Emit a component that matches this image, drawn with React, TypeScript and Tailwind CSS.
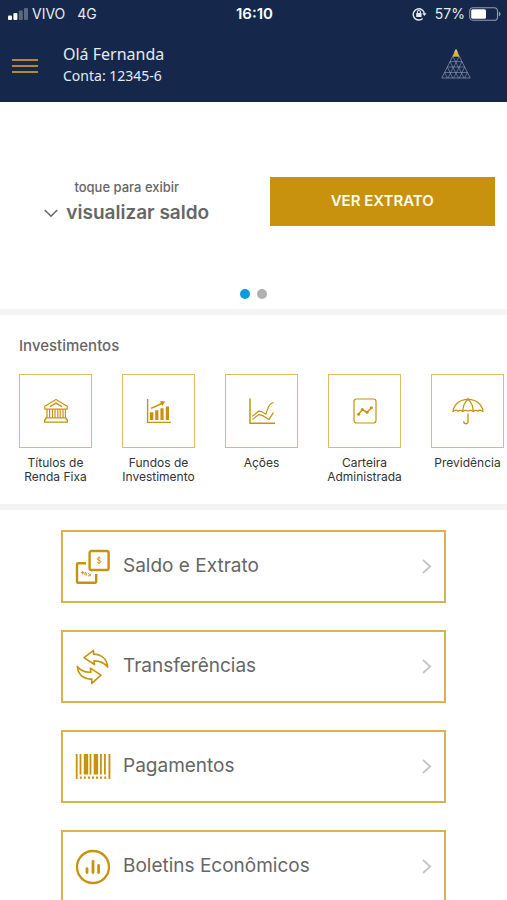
import type { ReactNode } from 'react';

const GOLD = '#c8920f';

function SignalIcon() {
  return (
    <svg width="20" height="14" viewBox="0 0 20 14" aria-hidden="true">
      <rect x="0" y="8.5" width="4" height="4.5" rx="1" fill="#fff" />
      <rect x="5.4" y="6" width="4" height="7" rx="1" fill="#fff" />
      <rect x="10.8" y="3.5" width="4" height="9.5" rx="1" fill="#fff" opacity="0.3" />
      <rect x="16" y="1" width="4" height="12" rx="1" fill="#fff" opacity="0.3" />
    </svg>
  );
}

function RotationLockIcon() {
  return (
    <svg width="15" height="14" viewBox="0 0 15 14" fill="none" stroke="#e6eaf2" aria-hidden="true">
      <path d="M10.6 11.6A5.6 5.6 0 1 1 12.4 6.6" strokeWidth="1.4" />
      <path d="M10.2 6.2h4.4l-2.2 2.9z" fill="#e6eaf2" stroke="none" />
      <rect x="4.2" y="6" width="5.4" height="4" rx="0.6" fill="#e6eaf2" stroke="none" />
      <path d="M5.4 6.2V5a1.5 1.5 0 0 1 3 0v1.2" strokeWidth="1.1" />
    </svg>
  );
}

function BatteryIcon() {
  return (
    <svg width="32" height="14" viewBox="0 0 32 14" aria-hidden="true">
      <rect x="0.7" y="0.7" width="27.8" height="12.6" rx="3.4" fill="none" stroke="#8f9bb0" strokeWidth="1.1" />
      <rect x="2.2" y="2.2" width="14.8" height="9.6" rx="1.6" fill="#fff" />
      <path d="M29.8 4.7c1.1.4 1.7 1.2 1.7 2.3s-.6 1.9-1.7 2.3z" fill="#8f9bb0" />
    </svg>
  );
}

function PyramidLogo() {
  return (
    <svg width="30" height="30" viewBox="0 0 30 30" fill="none" stroke="#8e9ab3" aria-label="Pirâmide" role="img">
      <path d="M15 .8.8 29h28.4z" strokeWidth="0.7" />
      <path
        d="M11.8 7.2h6.4M9 12.6h12M6.3 18h17.4M3.6 23.5h22.8M11.8 7.2l2.7 5.4 2.9 5.4 2.8 5.5L23 29M9 12.6l2.7 5.4 2.8 5.5 3 5.5M6.3 18 9 23.5l2.7 5.500M3.6 23.5 6.4 29M18.2 7.2l-2.7 5.4-2.9 5.4-2.8 5.5L7 29M21 12.6 18.3 18l-2.8 5.5-3 5.5M23.7 18 21 23.5 18.3 29M26.4 23.5 23.6 29"
        strokeWidth="0.6"
      />
      <path d="M15 .5 11.6 7.4h6.8z" fill="#e3b522" stroke="none" />
      <path d="M13.6 3.4 15 .6l1.4 2.8" stroke="#e8dfbd" strokeWidth="0.8" />
    </svg>
  );
}

function BankIcon() {
  return (
    <svg width="26" height="26" viewBox="0 0 26 26" fill="none" stroke={GOLD} strokeWidth="1.2" strokeLinejoin="round" aria-hidden="true">
      <path d="M13 1.5 1.8 8.3v2.8h22.4V8.3z" />
      <path d="M7 8.7 13 5.2l6 3.5" strokeWidth="1.4" />
      <path d="M4 11.2v8.6M6.6 11.2v8.6M9.5 11.2v8.6M12 11.2v8.6M14.8 11.2v8.6M17.2 11.2v8.6M20 11.2v8.6M22.4 11.2v8.6" />
      <path d="M2.8 19.8h20.4v1.8H24.4v2.6H1.6v-2.6h1.2z" />
    </svg>
  );
}

function GrowthIcon() {
  return (
    <svg width="26" height="26" viewBox="0 0 26 26" fill="none" stroke={GOLD} aria-hidden="true">
      <path d="M1.6 1v23.4H25" strokeWidth="1.4" />
      <path d="M3.8 14.3h3.6V22H3.8zM9.2 12.3h3.2V22H9.2zM14.4 10.3h3.2V22h-3.2zM19.8 8.4H23V22h-3.2z" fill={GOLD} stroke="none" />
      <path d="M5 10.4 10.5 8l6-3" strokeWidth="1.5" />
      <path d="m14 3 5.2.6-3 4.4z" fill={GOLD} stroke="none" />
    </svg>
  );
}

function StockIcon() {
  return (
    <svg width="28" height="28" viewBox="0 0 28 28" fill="none" stroke={GOLD} strokeWidth="1.2" aria-hidden="true">
      <path d="M2 1.500v24.800h25" strokeWidth="1.5" />
      <path d="m4.500 19.200 6-5 3 .4 4.400 2.600 2.600-7.400c1-2.200 2.600-3.600 5-4.500" />
      <path d="m4.500 22.400 6.200-4.800 3.500.8 6.800 4 4.400-6.800" />
    </svg>
  );
}

function PortfolioIcon() {
  return (
    <svg width="26" height="28" viewBox="0 0 26 28" fill="none" stroke={GOLD} strokeWidth="1.2" aria-hidden="true">
      <rect x="2" y="2" width="22" height="24" rx="2.4" />
      <path d="m6.600 17 3.800-4.400 4.600 2.600 4.400-4.200" strokeWidth="1.500" />
      <g fill={GOLD} stroke="none">
        <circle cx="6.600" cy="17.2" r="1.5" />
        <circle cx="10.400" cy="12.6" r="1.5" />
        <circle cx="15" cy="15.2" r="1.5" />
        <circle cx="19.400" cy="10.8" r="1.5" />
      </g>
    </svg>
  );
}

function UmbrellaIcon() {
  return (
    <svg width="32" height="28" viewBox="0 0 32 28" fill="none" stroke={GOLD} strokeWidth="1.3" strokeLinecap="round" strokeLinejoin="round" aria-hidden="true">
      <path d="M1 14.6C1.6 7.500 8 2.400 16 2.400s14.400 5.100 15 12.200c-1.600-1.600-3.600-1.800-5-.4-1.500-1-3.300-1-4.700.4-1.600-1.500-3.300-1.700-5.300-.6-2-1.100-3.700-.9-5.300.6-1.400-1.400-3.200-1.400-4.700-.4-1.400-1.400-3.400-1.200-5 .4z" />
      <path d="M10.700 14.400C11 8.800 13 4.600 16 2.400c3 2.200 5 6.400 5.300 12M16 1.400v1" />
      <path d="M16 17v8c0 2.400-4.200 2.300-4.200-.3" />
    </svg>
  );
}

function BalanceIcon() {
  return (
    <svg width="36" height="36" viewBox="0 0 36 36" fill="none" stroke={GOLD} strokeWidth="2.400" aria-hidden="true">
      <rect x="14.600" y="2" width="19" height="19" rx="1.800" />
      <path d="M11 14.300H3.600a1.600 1.600 0 0 0-1.600 1.600v16.300a1.600 1.600 0 0 0 1.600 1.600h16a1.600 1.600 0 0 0 1.600-1.600v-7.200" />
      <path d="M25.700 9.400c-.4-.6-1-.8-1.700-.8-1 0-1.700.5-1.700 1.300 0 1.800 3.500 1 3.500 2.800 0 .9-.8 1.300-1.800 1.300-.8 0-1.500-.3-1.900-.8M24 7.600v7.400" strokeWidth="0.900" />
      <path d="M6 23.700h3.400M7.700 22v3.400M9.600 25.800l1-2.800M11.400 24.200l-.4 2.600M13 24.600c1.800-.8 2.200 2.600 0 2.400M15.400 24.800l-.3 2.600" strokeWidth="1" />
    </svg>
  );
}

function TransferIcon() {
  return (
    <svg width="36" height="36" viewBox="0 0 36 36" fill="none" stroke={GOLD} strokeWidth="1.600" strokeLinejoin="round" aria-hidden="true">
      <path d="M9 8.600 18.600 1.400v3.700c7.600.3 13.400 4.700 14.100 13-3.600-4.400-7.600-6.200-13.700-6.200l.5 3.600z" />
      <path d="M26 26.200 16.800 34.400v-4.300C8.600 30.200 2.800 25.400 2.300 17.500c3.200 4.300 7.400 5.900 13.500 5.700l-.4-4z" />
    </svg>
  );
}

function BarcodeIcon() {
  return (
    <svg width="36" height="28" viewBox="0 0 36 28" fill={GOLD} aria-hidden="true">
      <path d="M.8 1h1.800v25H.8zM4.600 1h1.800v20.500H4.600zM8.800 1h4.400v20.500H8.800zM14.600 1h1.800v20.500h-1.800zM18.700 1h4.400v20.500h-4.400zM25 1h1.800v20.500H25zM29 1h1.800v20.500H29zM33.500 1h1.900v25h-1.900z" />
      <path d="M4.800 23.500h2v2.300h-2zM8.800 23.500h2v2.300h-2zM12.900 23.500h2v2.300h-2zM17 23.500h2v2.300h-2zM21 23.500h2v2.300h-2zM25 23.500h2v2.300h-2zM29.200 23.500h2v2.300h-2z" />
    </svg>
  );
}

function BulletinIcon() {
  return (
    <svg width="36" height="36" viewBox="0 0 36 36" fill="none" stroke={GOLD} strokeLinecap="round" aria-hidden="true">
      <circle cx="18" cy="18" r="16" strokeWidth="2.300" />
      <path d="M12 19.600v4M18 12.300v11.300M23.600 16.300v7.300" strokeWidth="2.800" />
    </svg>
  );
}

const investments: { lines: string[]; icon: ReactNode }[] = [
  { lines: ['Títulos de', 'Renda Fixa'], icon: <BankIcon /> },
  { lines: ['Fundos de', 'Investimento'], icon: <GrowthIcon /> },
  { lines: ['Ações'], icon: <StockIcon /> },
  { lines: ['Carteira', 'Administrada'], icon: <PortfolioIcon /> },
  { lines: ['Previdência'], icon: <UmbrellaIcon /> },
];

const menu: { label: string; icon: ReactNode }[] = [
  { label: 'Saldo e Extrato', icon: <BalanceIcon /> },
  { label: 'Transferências', icon: <TransferIcon /> },
  { label: 'Pagamentos', icon: <BarcodeIcon /> },
  { label: 'Boletins Econômicos', icon: <BulletinIcon /> },
];

export default function App() {
  return (
    <div className="flex h-screen flex-col overflow-hidden bg-white font-['Inter',sans-serif] text-[#666]">
      <header className="shrink-0 bg-[#15284b] pb-4 text-[#e6eaf2]">
        <div className="grid h-7 grid-cols-3 items-center pl-2 pr-[6px] text-sm">
          <div className="flex items-center gap-1">
            <SignalIcon />
            <span>VIVO</span>
            <span className="ml-2">4G</span>
          </div>
          <span className="text-center text-[15px] font-semibold text-white">16:10</span>
          <div className="flex items-center justify-end gap-1">
            <RotationLockIcon />
            <span className="ml-1">57%</span>
            <BatteryIcon />
          </div>
        </div>
        <div className="flex items-center pl-3 pr-9 pt-[14px] font-['Noto_Sans',sans-serif]">
          <button type="button" aria-label="Menu" className="flex w-[26px] flex-col gap-1 pt-1">
            <span className="h-[2px] w-full bg-[#b98a24]" />
            <span className="h-[2px] w-full bg-[#b98a24]" />
            <span className="h-[2px] w-full bg-[#b98a24]" />
          </button>
          <div className="ml-[25px] flex-1">
            <p className="text-base leading-6">Olá Fernanda</p>
            <p className="text-sm leading-5">Conta: 12345-6</p>
          </div>
          <PyramidLogo />
        </div>
      </header>

      <main className="min-h-0 flex-1 overflow-y-auto [scrollbar-width:none]">
        <section className="border-b-[6px] border-[#f4f4f4] pb-[10px] pt-[75px]">
          <div className="grid grid-cols-2 items-start">
            <button type="button" className="flex flex-col items-center text-[#666]">
              <span className="text-[13px] leading-5 font-medium">toque para exibir</span>
              <span className="flex items-center gap-2 text-[19px] leading-8 font-semibold">
                <svg width="14" height="9" viewBox="0 0 14 9" fill="none" stroke="#666" strokeWidth="1.500" aria-hidden="true">
                  <path d="m.8 1 6.200 6.200L13.200 1" />
                </svg>
                visualizar saldo
              </span>
            </button>
            <button type="button" className="ml-4 mr-3 h-[49px] bg-[#c8920f] text-[15px] font-semibold text-[#fffbe9]">
              VER EXTRATO
            </button>
          </div>
          <div className="mt-[60px] flex justify-center gap-[7px]">
            <button type="button" aria-label="Painel 1" className="size-[10px] rounded-full bg-[#0a9bdc]" />
            <button type="button" aria-label="Painel 2" className="size-[10px] rounded-full bg-[#b0b0b0]" />
          </div>
        </section>

        <section className="border-b-[6px] border-[#f4f4f4] pb-5 pt-[19px]">
          <h2 className="pl-[19px] text-[15px] leading-6 font-medium">Investimentos</h2>
          <ul className="mt-4 flex gap-[30px] overflow-x-auto pl-[19px] [scrollbar-width:none]">
            {investments.map((item) => (
              <li key={item.lines[0]} className="w-[73px] shrink-0">
                <button type="button" className="flex w-full flex-col items-center text-xs leading-[14px] whitespace-nowrap text-[#333]">
                  <span className="mb-2 flex h-[74px] w-full items-center justify-center border border-[#dfbc63]">{item.icon}</span>
                  {item.lines.map((line) => (
                    <span key={line}>{line}</span>
                  ))}
                </button>
              </li>
            ))}
          </ul>
        </section>

        <nav className="flex flex-col gap-[27px] px-[61px] py-5">
          {menu.map((item) => (
            <a key={item.label} href="#" className="flex h-[73px] items-center border-2 border-[#d9b352] px-3">
              <span className="flex w-9 justify-center">{item.icon}</span>
              <span className="ml-3 flex-1 text-[19px]">{item.label}</span>
              <svg width="10" height="15" viewBox="0 0 10 15" fill="none" stroke="#c4c4c4" strokeWidth="1.800" aria-hidden="true">
                <path d="m1 1 7.200 6.500L1 14" />
              </svg>
            </a>
          ))}
        </nav>
      </main>
    </div>
  );
}
